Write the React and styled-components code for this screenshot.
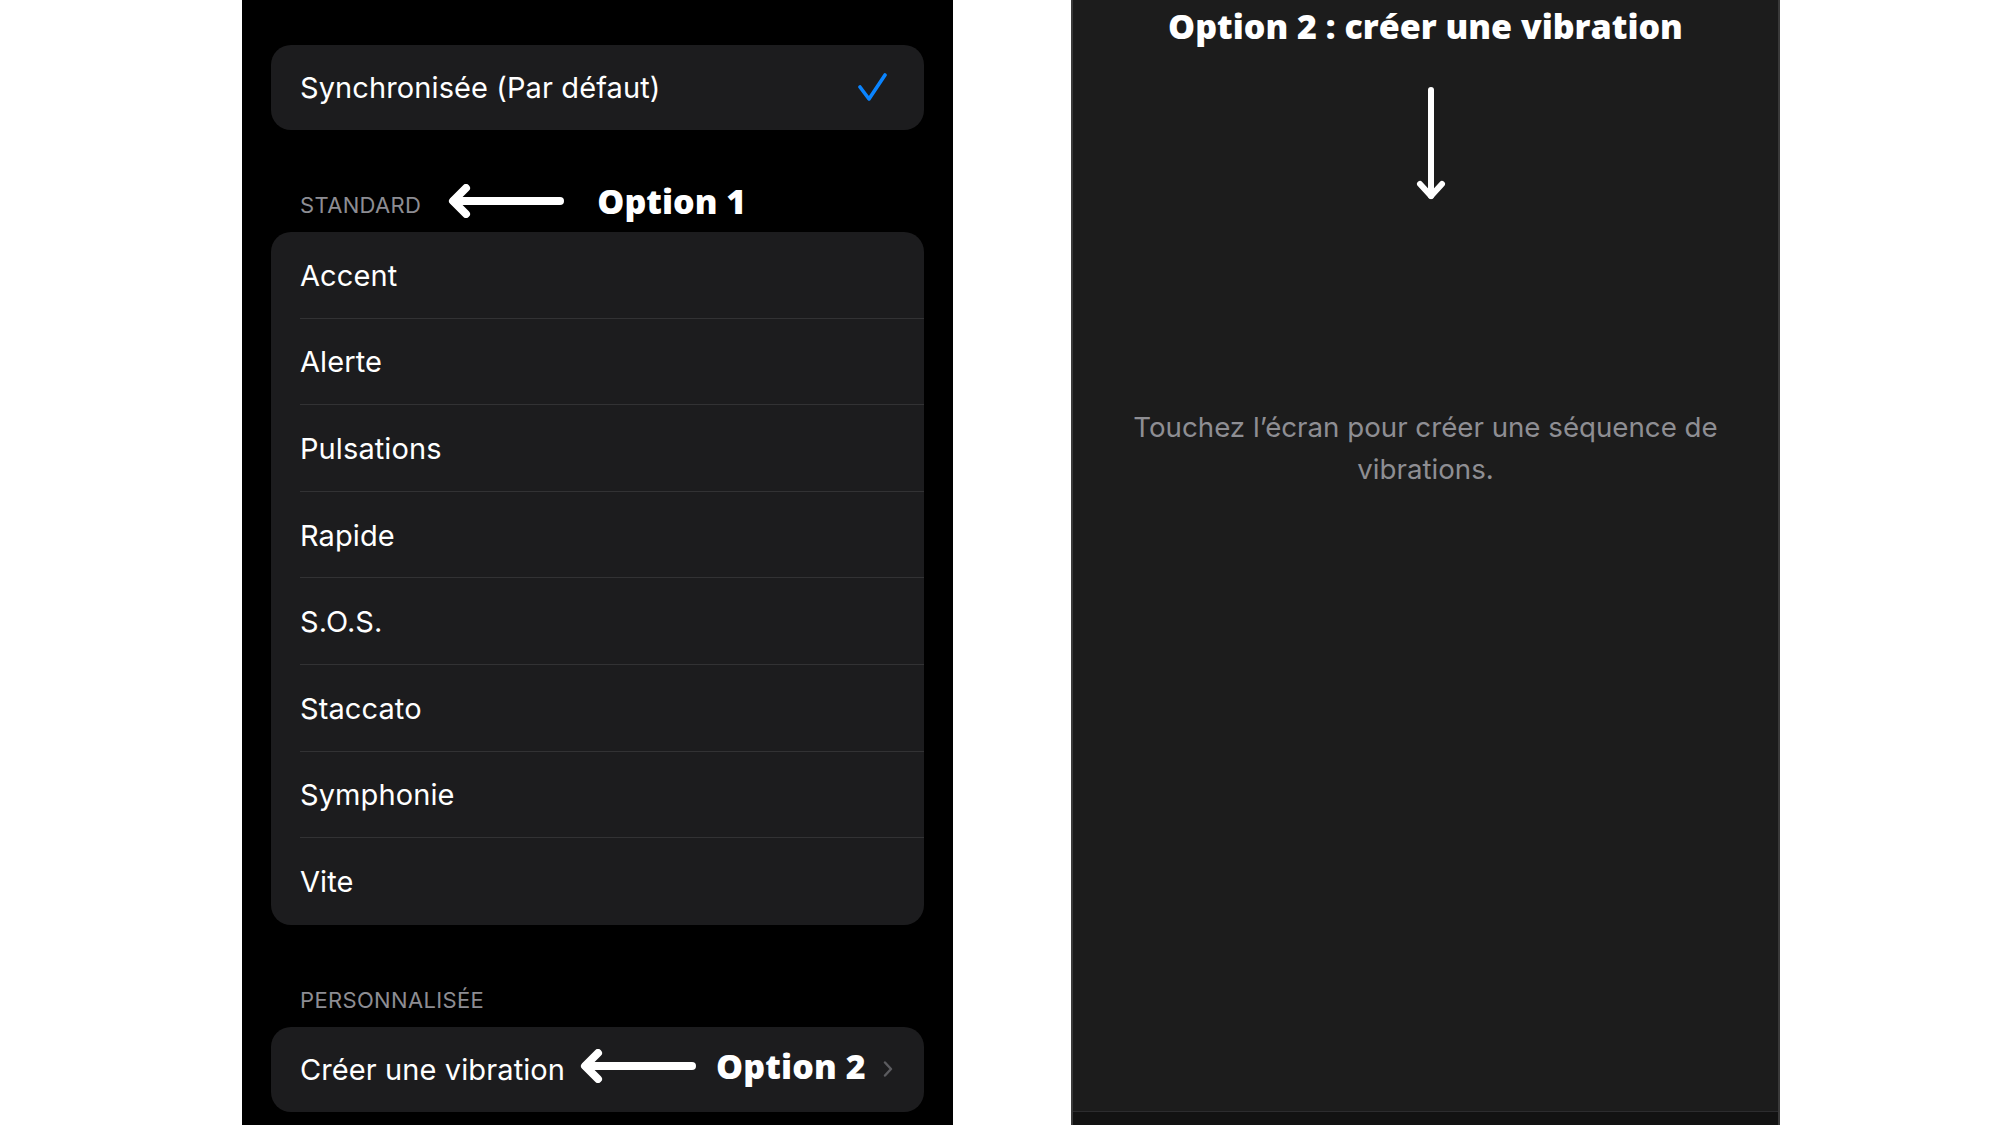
import React from "react";
import styled, { createGlobalStyle } from "styled-components";

const GlobalStyle = createGlobalStyle`
  html, body {
    margin: 0;
    padding: 0;
    background: #ffffff;
  }
  body {
    font-family: Inter, "Liberation Sans", sans-serif;
  }
`;

const Page = styled.div`
  width: 2000px;
  height: 1125px;
  overflow: hidden;
  display: flex;
  align-items: stretch;
  padding-left: 242px;
  gap: 118px;
  box-sizing: border-box;
  background: #ffffff;
`;

const Phone = styled.div`
  width: 711px;
  height: 100%;
  background: #000000;
  padding: 45px 29px 0;
  box-sizing: border-box;
  display: flex;
  flex-direction: column;
`;

const Card = styled.div`
  background: #1c1c1e;
  border-radius: 20px;
  overflow: hidden;
  display: flex;
  flex-direction: column;
`;

const Row = styled.div`
  height: ${({ $h }) => $h || 86.6}px;
  flex-shrink: 0;
  display: flex;
  align-items: center;
  padding: 0 ${({ $pr }) => $pr || 29}px 0 29px;
  box-sizing: border-box;
  position: relative;
  color: #ffffff;
  font-size: 29px;
  letter-spacing: 0.1px;

  &:not(:last-child)::after {
    content: "";
    position: absolute;
    left: 29px;
    right: 0;
    bottom: 0;
    height: 1px;
    background: #323234;
  }
`;

const Label = styled.span`
  white-space: nowrap;
`;

const Trailing = styled.span`
  margin-left: auto;
  display: flex;
  align-items: center;
`;

const Gap = styled.span`
  width: ${({ $w }) => $w}px;
  flex-shrink: 0;
`;

const SectionRow = styled.div`
  height: 46px;
  margin: 52px 0 4px;
  padding-left: 29px;
  display: flex;
  align-items: center;
  gap: 27px;
`;

const SectionTitle = styled.span`
  font-size: 22px;
  color: #8d8d93;
  text-transform: uppercase;
  letter-spacing: 0.35px;
`;

const Note = styled.span`
  font-family: "Open Sans", "Liberation Sans", sans-serif;
  font-weight: 800;
  font-size: 34px;
  color: #ffffff;
  white-space: nowrap;
  margin-left: ${({ $ml }) => $ml || 0}px;
  margin-bottom: ${({ $lift }) => $lift || 0}px;
`;

const ArrowSvg = styled.svg`
  display: block;
  flex-shrink: 0;
  margin-bottom: ${({ $lift }) => $lift || 0}px;
`;

const Preview = styled.div`
  width: 709px;
  height: 100%;
  background: #1c1c1c;
  border-left: 2px solid #3a3a3a;
  border-right: 2px solid #3a3a3a;
  box-sizing: border-box;
  display: flex;
  flex-direction: column;
  align-items: center;
  padding-top: 3px;
`;

const PreviewTitle = styled.h1`
  margin: 0;
  font-family: "Open Sans", "Liberation Sans", sans-serif;
  font-weight: 800;
  font-size: 34px;
  color: #ffffff;
  white-space: nowrap;
`;

const DownArrow = styled.svg`
  margin-top: 38px;
  margin-left: 10px;
  display: block;
`;

const Hint = styled.p`
  margin: 205px 0 0;
  font-size: 27.7px;
  line-height: 42px;
  color: #8e8e93;
  text-align: center;
`;

const Spacer = styled.div`
  flex: 1;
`;

const BottomBar = styled.div`
  align-self: stretch;
  height: 13px;
  background: #121212;
  border-top: 1px solid #2c2c2e;
`;

const LeftArrow = ({ lift }) => (
  <ArrowSvg width="116" height="34" viewBox="0 0 116 34" $lift={lift}>
    <g stroke="#ffffff" strokeWidth="8" strokeLinecap="round" strokeLinejoin="round" fill="none">
      <line x1="6" y1="17" x2="112" y2="17" />
      <polyline points="18,4 5,17 18,30" />
    </g>
  </ArrowSvg>
);

const Check = () => (
  <svg width="30" height="30" viewBox="0 0 30 30">
    <polyline
      points="3,14 12,26 28,2"
      fill="none"
      stroke="#0a84ff"
      strokeWidth="3.6"
      strokeLinecap="round"
      strokeLinejoin="round"
    />
  </svg>
);

const Chevron = () => (
  <svg width="10" height="16" viewBox="0 0 10 16">
    <polyline
      points="2,1.5 8,8 2,14.5"
      fill="none"
      stroke="#5b5b5f"
      strokeWidth="2.4"
      strokeLinecap="round"
      strokeLinejoin="round"
    />
  </svg>
);

const patterns = [
  "Accent",
  "Alerte",
  "Pulsations",
  "Rapide",
  "S.O.S.",
  "Staccato",
  "Symphonie",
  "Vite",
];

export default function App() {
  return (
    <>
      <GlobalStyle />
      <Page>
        <Phone>
          <Card>
            <Row $h={85} $pr={37}>
              <Label>Synchronisée (Par défaut)</Label>
              <Trailing>
                <Check />
              </Trailing>
            </Row>
          </Card>

          <SectionRow>
            <SectionTitle>Standard</SectionTitle>
            <LeftArrow lift={8} />
            <Note $ml={6} $lift={8}>Option 1</Note>
          </SectionRow>
          <Card>
            {patterns.map((name) => (
              <Row key={name}>
                <Label>{name}</Label>
              </Row>
            ))}
          </Card>

          <SectionRow>
            <SectionTitle>Personnalisée</SectionTitle>
          </SectionRow>
          <Card>
            <Row $h={85} $pr={31}>
              <Label>Créer une vibration</Label>
              <Gap $w={15} />
              <LeftArrow lift={6} />
              <Note $ml={20} $lift={6}>Option 2</Note>
              <Trailing>
                <Chevron />
              </Trailing>
            </Row>
          </Card>
        </Phone>

        <Preview>
          <PreviewTitle>Option 2 : créer une vibration</PreviewTitle>
          <DownArrow width="32" height="114" viewBox="0 0 32 114">
            <g stroke="#ffffff" strokeWidth="6" strokeLinecap="round" strokeLinejoin="round" fill="none">
              <line x1="16" y1="3" x2="16" y2="109" />
              <polyline points="5,97 16,109 27,97" />
            </g>
          </DownArrow>
          <Hint>
            Touchez l’écran pour créer une séquence de
            <br />
            vibrations.
          </Hint>
          <Spacer />
          <BottomBar />
        </Preview>
      </Page>
    </>
  );
}
